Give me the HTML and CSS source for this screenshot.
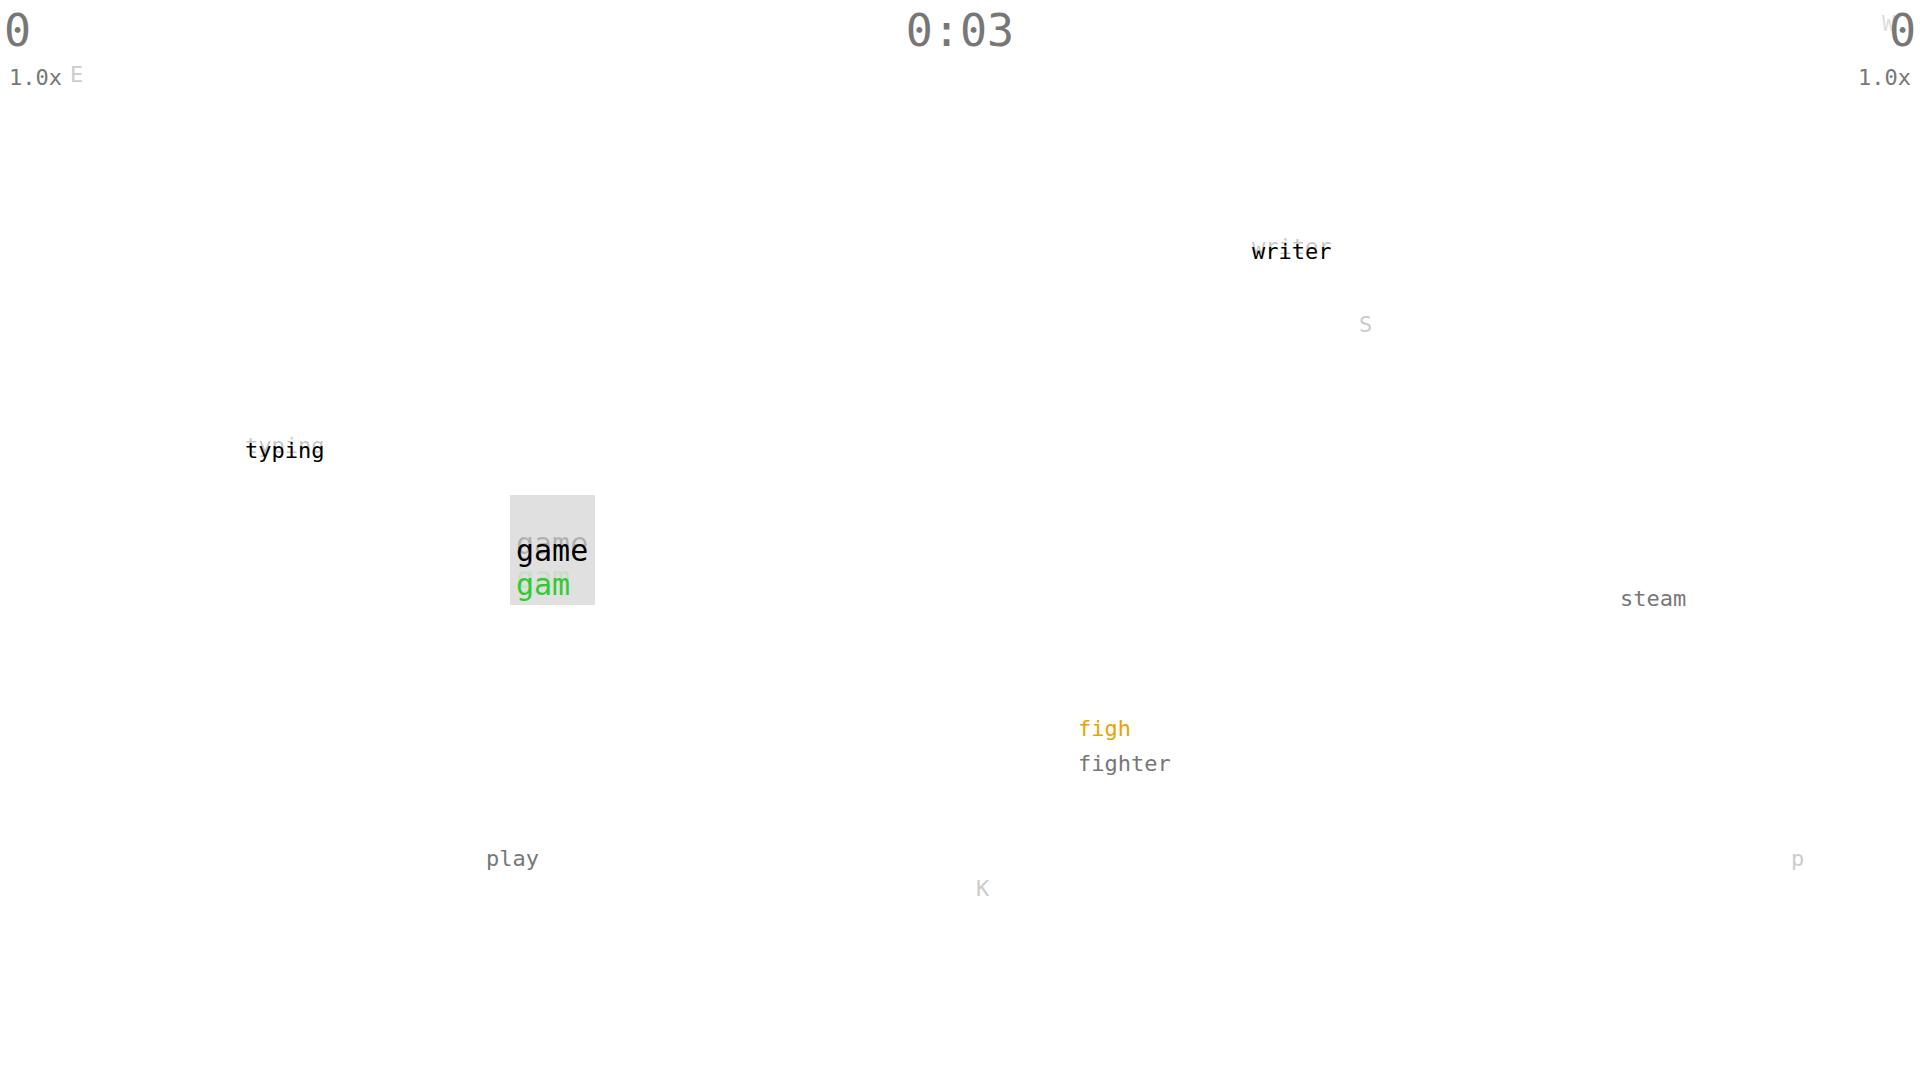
FILE: index.html
```html
<!DOCTYPE html>
<html>
<head>
<meta charset="utf-8">
<title>Typing game</title>
<link rel="stylesheet" href="styles.css">
</head>
<body>
<div class="game">
  <header class="hud">
    <div class="player player-left">
      <div class="score">0</div>
      <div class="mult">1.0x</div>
    </div>
    <div class="timer">0:03</div>
    <div class="player player-right">
      <div class="score">0</div>
      <div class="mult">1.0x</div>
    </div>
  </header>

  <div class="field">
    <span class="letter" style="left:70px;top:64px">E</span>
    <span class="letter letter-faint" style="left:1882px;top:13px">W</span>
    <span class="letter" style="left:1359px;top:314px">S</span>
    <span class="letter" style="left:976px;top:878px">K</span>
    <span class="letter" style="left:1791px;top:848px">p</span>

    <span class="word word-falling" style="left:1252px;top:241px">writer</span>
    <span class="word word-falling" style="left:245px;top:440px">typing</span>
    <span class="word word-idle" style="left:1620px;top:588px">steam</span>
    <span class="word word-idle" style="left:486px;top:848px">play</span>

    <div class="word-stack" style="left:1078px;top:718px">
      <span class="word-typed word-typed-other">figh</span>
      <span class="word-idle-inline">fighter</span>
    </div>

    <div class="active-box" style="left:510px;top:495px">
      <span class="active-word">game</span>
      <span class="active-typed">gam</span>
    </div>
  </div>
</div>
</body>
</html>
```

FILE: styles.css
```css
html, body {
  margin: 0;
  padding: 0;
  background: #ffffff;
}

body {
  font-family: "DejaVu Sans Mono", "Liberation Mono", monospace;
  color: #777777;
}

.game {
  position: relative;
  width: 1920px;
  height: 1080px;
  overflow: hidden;
}

.hud {
  display: grid;
  grid-template-columns: 1fr auto 1fr;
  align-items: start;
  padding: 5px 4px 0;
  position: relative;
  z-index: 1;
}

.player {
  display: flex;
  flex-direction: column;
}

.player-left {
  align-items: flex-start;
}

.player-right {
  align-items: flex-end;
}

.score {
  font-size: 45px;
  line-height: 52px;
  color: #777777;
}

.mult {
  font-size: 22px;
  line-height: 26px;
  margin-top: 8px;
  padding: 0 5px;
  color: #777777;
}

.timer {
  font-size: 45px;
  line-height: 52px;
  color: #777777;
}

.field {
  position: absolute;
  inset: 0;
}

.letter {
  position: absolute;
  font-size: 22px;
  line-height: 1;
  color: #cccccc;
}

.letter-faint {
  color: #dddddd;
}

.word {
  position: absolute;
  font-size: 22px;
  line-height: 1;
  white-space: nowrap;
}

.word-falling {
  color: #000000;
  text-shadow: 0 -5px 0 rgba(0, 0, 0, 0.24);
}

.word-idle {
  color: #777777;
}

.word-stack {
  position: absolute;
  display: flex;
  flex-direction: column;
  gap: 13px;
  font-size: 22px;
  line-height: 1;
  white-space: nowrap;
}

.word-typed-other {
  color: #e8a500;
}

.word-idle-inline {
  color: #777777;
}

.active-box {
  position: absolute;
  width: 73px;
  padding: 39px 6px 3px;
  background: #e0e0e0;
  display: flex;
  flex-direction: column;
  font-size: 30px;
  line-height: 34px;
  white-space: nowrap;
}

.active-word {
  color: #000000;
  text-shadow: 0 -7px 0 rgba(0, 0, 0, 0.22);
}

.active-typed {
  color: #2ecc2e;
  text-shadow: 0 -7px 0 rgba(46, 204, 46, 0.15);
}
```
